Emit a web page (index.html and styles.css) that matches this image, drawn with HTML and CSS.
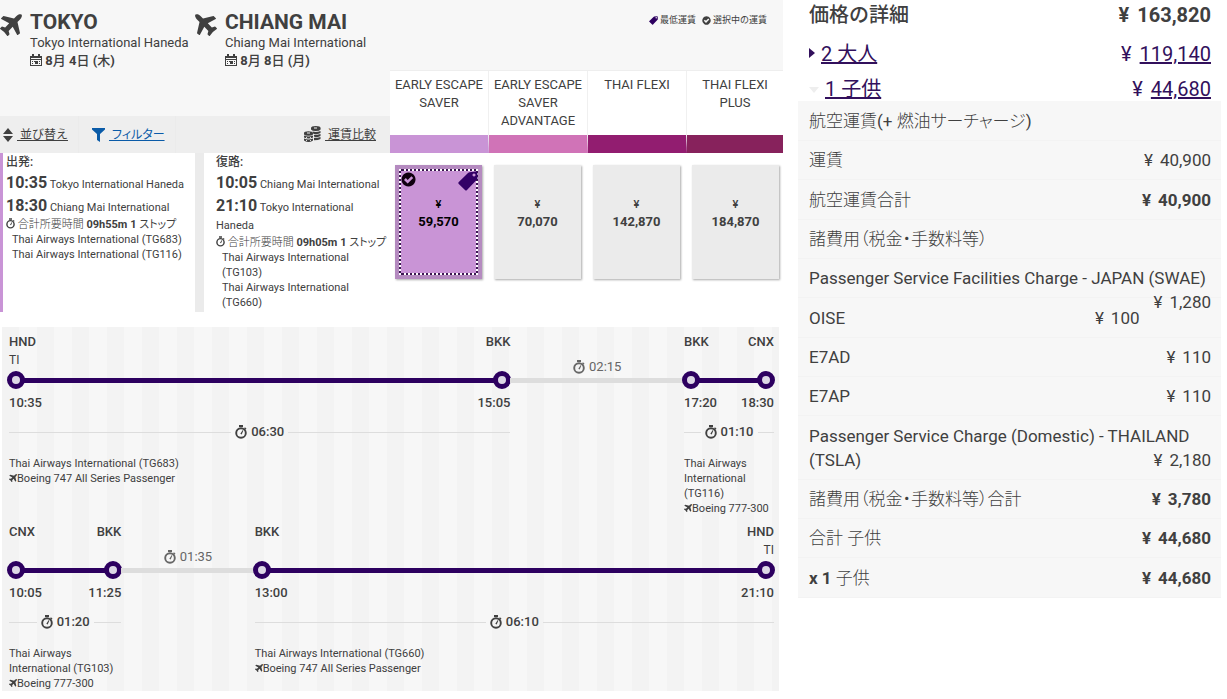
FILE: index.html
```html
<!DOCTYPE html>
<html lang="ja">
<head>
<meta charset="utf-8">
<title>フライト選択</title>
<link rel="stylesheet" href="styles.css">
</head>
<body>
<svg class="sprite" aria-hidden="true">
  <symbol id="plane" viewBox="0 128 1408 1408"><path d="M1376 160q44 52 12 148t-108 172l-161 161 160 696q5 19-12 33l-128 96q-7 6-19 6-4 0-7-1-15-3-21-14l-279-508-259 259 53 194q5 17-8 31l-96 96q-9 9-23 9h-2q-15-2-24-13l-189-252-252-189q-11-7-13-23-1-13 9-25l96-97q9-9 23-9 6 0 8 1l194 53 259-259-508-279q-14-8-17-24-2-16 9-27l128-128q14-13 30-8l665 159 160-160q76-76 172-108t148 12z"/></symbol>
  <symbol id="calendar" viewBox="0 0 12 12"><path fill-rule="evenodd" d="M0 2h2V0h2v2h4V0h2v2h2v10H0zM1 4v1h10V4zM1 6v5h10V6z"/><path d="M2 7h1v1H2zM4 7h1v1H4zM9 7h1v1H9zM5 7h3v3H5zM2 9h1v1H2zM9 9h1v1H9z"/></symbol>
  <symbol id="watch" viewBox="0 0 12 14"><path d="M4 0h4v2H4z"/><path d="M10 2.200l1.500 1.500-1 1L9 3.200z"/><circle cx="6" cy="8" r="4.800" fill="none" stroke="currentColor" stroke-width="1.900"/><path d="M5.300 8.800L7.800 5l.6.4-1.700 4z"/></symbol>
  <symbol id="tag" viewBox="0 0 20 20"><path fill-rule="evenodd" d="M11.500 1.200L18 .500q1.300 0 1.400 1.200l.2 5.300q0 .8-.6 1.400L9 19q-1 1-2 0L.8 13q-1-1 0-2L10 2q.7-.7 1.500-.8zM16 2.400a1.500 1.500 0 1 0 .01 0z"/></symbol>
  <symbol id="check" viewBox="0 0 16 16"><path fill-rule="evenodd" d="M8 .500a7.500 7.500 0 1 0 .01 0zM3.200 8.400l1.900-1.900 2 2 4-4 1.900 1.900-5.900 5.900z"/></symbol>
  <symbol id="sort" viewBox="0 0 10 14"><path d="M5 0l5 6H0zM0 8h10l-5 6z"/></symbol>
  <symbol id="funnel" viewBox="0 0 13 14"><path d="M0 0h13v1.500L8 6v8l-3-2V6L0 1.500z"/></symbol>
  <symbol id="coins" viewBox="0 0 17 17"><path d="M7 2q0-2 4.800-2t4.800 2v1.500q-1 1.500-4.800 1.500T7 3.500zM8.500 5.500q4 1 8-.5v2q-2 1.500-7 1zM9.800 9q4 0 6.700-1v2q-2 1.200-6 1.200zM10 12q4 0 6.500-1v2q-2 1.300-6.500 1.300z"/><path d="M0 7q0-1.800 4.400-1.800T9 7v1.500q-1 1.300-4.600 1.300T0 8.500zM0 9.500q4.400 2 9 0v2q-4.400 2-9 0zM0 12.600q4.400 2 9 0v2q-4.400 3-9 0z"/><path d="M3 7h3M10 2h3M2 11.600h1M6 11.600h1M2 14.600h1M6 14.600h1" fill="none" stroke="#eee"/></symbol>
</svg>
<main class="page">
  <section class="booking">
    <header class="head">
      <div class="head-left">
        <div class="trips">
          <div class="trip">
            <svg class="trip-icon"><use href="#plane"/></svg>
            <div>
              <h2 class="city">TOKYO</h2>
              <p class="airport">Tokyo International Haneda</p>
              <p class="date"><svg class="cal"><use href="#calendar"/></svg> <b>8</b>月 <b>4</b>日 <b>(</b>木<b>)</b></p>
            </div>
          </div>
          <div class="trip">
            <svg class="trip-icon mirrored"><use href="#plane"/></svg>
            <div>
              <h2 class="city">CHIANG MAI</h2>
              <p class="airport">Chiang Mai International</p>
              <p class="date"><svg class="cal"><use href="#calendar"/></svg> <b>8</b>月 <b>8</b>日 <b>(</b>月<b>)</b></p>
            </div>
          </div>
        </div>
        <nav class="tools">
          <a class="tool" href="#sort"><svg class="i-sort"><use href="#sort"/></svg><span>&nbsp;並び替え</span></a>
          <a class="tool tool-blue" href="#filter"><svg class="i-funnel"><use href="#funnel"/></svg><span class="kana">&nbsp;フィルター</span></a>
          <a class="tool tool-end" href="#compare"><svg class="i-coins"><use href="#coins"/></svg><span>&nbsp;運賃比較</span></a>
        </nav>
      </div>
      <div class="head-right">
        <p class="legend"><svg class="i-legend purple"><use href="#tag"/></svg><span>最低運賃</span><svg class="i-legend second"><use href="#check"/></svg><span>選択中の運賃</span></p>
        <div class="families">
          <div class="family lilac">EARLY ESCAPE SAVER</div>
          <div class="family pink">EARLY ESCAPE SAVER ADVANTAGE</div>
          <div class="family plum">THAI FLEXI</div>
          <div class="family wine">THAI FLEXI PLUS</div>
        </div>
      </div>
    </header>
    <div class="choice">
      <div class="legs">
        <div class="leg leg-out">
          <p class="way">出発:</p>
          <p class="stop"><b class="clock">10:35</b> Tokyo International Haneda</p>
          <p class="stop"><b class="clock">18:30</b> Chiang Mai International</p>
          <p class="total"><svg class="i-watch small"><use href="#watch"/></svg> <span class="thin">合計所要時間</span> <b>09h55m 1</b> <span class="kana">ストップ</span></p>
          <ul class="flights"><li>Thai Airways International (TG683)</li><li>Thai Airways International (TG116)</li></ul>
        </div>
        <div class="leg leg-back">
          <p class="way">復路:</p>
          <p class="stop"><b class="clock">10:05</b> Chiang Mai International</p>
          <p class="stop"><b class="clock">21:10</b> Tokyo International Haneda</p>
          <p class="total"><svg class="i-watch small"><use href="#watch"/></svg> <span class="thin">合計所要時間</span> <b>09h05m 1</b> <span class="kana">ストップ</span></p>
          <ul class="flights"><li>Thai Airways International (TG103)</li><li>Thai Airways International (TG660)</li></ul>
        </div>
      </div>
      <div class="fares">
        <button class="fare selected" type="button" aria-pressed="true"><span class="yen">¥</span><span>59,570</span><svg class="mark-check"><use href="#check"/></svg><svg class="mark-tag"><use href="#tag"/></svg></button>
        <button class="fare" type="button"><span class="yen">¥</span><span>70,070</span></button>
        <button class="fare" type="button"><span class="yen">¥</span><span>142,870</span></button>
        <button class="fare" type="button"><span class="yen">¥</span><span>184,870</span></button>
      </div>
    </div>
    <div class="timeline">
      <div class="route">
        <div class="segment" style="flex-grow:390">
          <div class="ends"><span>HND<small>TI</small></span><span>BKK</span></div>
          <div class="track"></div>
          <div class="times"><span>10:35</span><span>15:05</span></div>
          <p class="duration"><svg class="i-watch"><use href="#watch"/></svg>06:30</p>
          <p class="craft">Thai Airways International (TG683)<br><svg class="i-craft"><use href="#plane"/></svg>Boeing 747 All Series Passenger</p>
        </div>
        <div class="layover" style="flex-grow:135"><svg class="i-watch"><use href="#watch"/></svg>02:15</div>
        <div class="segment" style="flex-grow:70">
          <div class="ends"><span>BKK</span><span>CNX</span></div>
          <div class="track"></div>
          <div class="times"><span>17:20</span><span>18:30</span></div>
          <p class="duration"><svg class="i-watch"><use href="#watch"/></svg>01:10</p>
          <p class="craft">Thai Airways International (TG116)<br><svg class="i-craft"><use href="#plane"/></svg>Boeing 777-300</p>
        </div>
      </div>
      <div class="route">
        <div class="segment" style="flex-grow:80">
          <div class="ends"><span>CNX</span><span>BKK</span></div>
          <div class="track"></div>
          <div class="times"><span>10:05</span><span>11:25</span></div>
          <p class="duration"><svg class="i-watch"><use href="#watch"/></svg>01:20</p>
          <p class="craft">Thai Airways International (TG103)<br><svg class="i-craft"><use href="#plane"/></svg>Boeing 777-300</p>
        </div>
        <div class="layover" style="flex-grow:95"><svg class="i-watch"><use href="#watch"/></svg>01:35</div>
        <div class="segment" style="flex-grow:370">
          <div class="ends"><span>BKK</span><span>HND<small>TI</small></span></div>
          <div class="track"></div>
          <div class="times"><span>13:00</span><span>21:10</span></div>
          <p class="duration"><svg class="i-watch"><use href="#watch"/></svg>06:10</p>
          <p class="craft">Thai Airways International (TG660)<br><svg class="i-craft"><use href="#plane"/></svg>Boeing 747 All Series Passenger</p>
        </div>
      </div>
    </div>
  </section>
  <aside class="price">
    <h2 class="price-title"><span>価格の詳細</span><span class="sum"><span class="cur">¥</span>163,820</span></h2>
    <p class="pax"><span><i class="arrow"></i><a href="#adult">2 大人</a></span><span class="sum"><span class="cur">¥</span><a href="#adult">119,140</a></span></p>
    <p class="pax"><span><i class="arrow open"></i><a href="#child">1 子供</a></span><span class="sum"><span class="cur">¥</span><a href="#child">44,680</a></span></p>
    <ul class="items">
      <li class="tall thin">航空運賃<b>(+</b> <span class="kana">燃油サーチャージ</span><b>)</b></li>
      <li><span class="thin">運賃</span><span class="amount"><span class="cur">¥</span>40,900</span></li>
      <li class="tall"><span class="thin">航空運賃合計</span><b class="amount"><span class="cur">¥</span>40,900</b></li>
      <li class="thin kana">諸費用（税金・手数料等）</li>
      <li>Passenger Service Facilities Charge - JAPAN (SWAE)<span class="amount"><span class="cur">¥</span>1,280</span></li>
      <li class="tall">OISE<span class="amount"><span class="cur">¥</span>100</span></li>
      <li>E7AD<span class="amount"><span class="cur">¥</span>110</span></li>
      <li>E7AP<span class="amount"><span class="cur">¥</span>110</span></li>
      <li class="tall">Passenger Service Charge (Domestic) - THAILAND (TSLA)<span class="amount"><span class="cur">¥</span>2,180</span></li>
      <li><span class="thin kana">諸費用（税金・手数料等）合計</span><b class="amount"><span class="cur">¥</span>3,780</b></li>
      <li><span class="thin">合計 子供</span><b class="amount"><span class="cur">¥</span>44,680</b></li>
      <li class="tall"><b>x 1</b> <span class="thin">子供</span><b class="amount"><span class="cur">¥</span>44,680</b></li>
    </ul>
  </aside>
</main>
</body>
</html>
```
FILE: styles.css
```css
*, *::before, *::after { box-sizing: border-box; }
body {
  margin: 0;
  background: #fff;
  color: #404040;
  font: 13px/18px Roboto, "Noto Sans CJK JP", sans-serif;
}
h2, p, ul { margin: 0; padding: 0; }
ul { list-style: none; }
svg { fill: currentColor; flex: none; }
.sprite { display: none; }
.thin { font-weight: 300; }
.kana { font-feature-settings: "palt"; }

.page {
  display: grid;
  grid-template-columns: minmax(0, 783fr) minmax(0, 423fr);
  gap: 15px;
  padding-right: 6px;
  align-items: start;
}

/* header */
.head, .choice {
  display: grid;
  grid-template-columns: minmax(0, 390fr) minmax(0, 393fr);
}
.head { background: #f7f7f7; }
.head-left, .head-right {
  display: flex;
  flex-direction: column;
  justify-content: space-between;
}
.trips {
  display: grid;
  grid-template-columns: 1fr 1fr;
  padding-top: 10px;
}
.trip { display: flex; gap: 8px; }
.trip-icon { width: 22px; height: 22px; margin-top: 4px; }
.mirrored { transform: scaleX(-1); }
.city { font-size: 21px; line-height: 24px; font-weight: 700; }
.date { font-weight: 500; }
.cal { width: 12px; height: 12px; vertical-align: -1px; }
.tools {
  display: flex;
  height: 37px;
  background: #eee;
}
.tool {
  display: flex;
  align-items: center;
  color: #404040;
  font-size: 12px;
  text-decoration: none;
  padding: 0 10px 0 3px;
  border-right: 1px solid #ebebeb;
  gap: 4px;
}
.tool span { text-decoration: underline; }
.tool-blue { color: #0a5ba8; padding-left: 13px; }
.tool-end { margin-left: auto; border: 0; padding-right: 14px; }
.i-sort { width: 10px; height: 14px; }
.i-funnel { width: 13px; height: 14px; }
.i-coins { width: 17px; height: 17px; }
.legend {
  display: flex;
  justify-content: flex-end;
  align-items: center;
  gap: 2px;
  padding: 11px 16px 41px 0;
  font-size: 9px;
}
.i-legend { width: 9px; height: 9px; }
.second { margin-left: 4px; }
.purple { color: #2d0060; }
.families {
  display: grid;
  grid-template-columns: 99fr 99fr 99fr 96fr;
  border-top: 1px solid #eee;
}
.family {
  min-height: 82px;
  padding: 5px 2px 4px;
  background: #fff;
  border-right: 1px solid #f0f0f0;
  border-bottom: 18px solid;
  text-align: center;
}
.lilac { border-bottom-color: #c994d6; }
.pink { border-bottom-color: #d073b7; }
.plum { border-bottom-color: #921d70; }
.wine { border-bottom-color: #87225c; border-right: 0; }

/* chosen flights */
.legs { display: grid; grid-template-columns: minmax(0, 1fr) minmax(0, 1fr); }
.leg { font-size: 11px; }
.leg-out { border-left: 3px solid #c994d6; padding-left: 3px; min-height: 159px; }
.leg-back { border-left: 9px solid #ebebeb; padding: 0 2px 0 12px; }
.way { font-size: 12px; font-weight: 500; }
.clock { font-size: 16px; line-height: 23px; }
.total { line-height: 15px; white-space: nowrap; }
.flights { padding-left: 6px; line-height: 15px; }
.fares {
  display: grid;
  grid-template-columns: repeat(4, 1fr);
  gap: 12px;
  padding: 12px 4px 0 5px;
  align-items: start;
}
.fare {
  position: relative;
  display: flex;
  flex-direction: column;
  align-items: center;
  height: 114px;
  padding: 31px 0 0;
  border: 0;
  background: #ebebeb;
  box-shadow: 1px 1px 2px #aaa;
  color: #404040;
  font: 700 13px/18px Roboto, sans-serif;
}
.yen { font-size: 11px; font-weight: 500; line-height: 17px; }
.selected {
  color: #000;
  padding-top: 27px;
  border: 4px solid #b58bc0;
  background: #c994d6;
}
.selected::before {
  content: "";
  position: absolute;
  inset: 0;
  border: 2px dotted #fff;
  background: linear-gradient(#c994d6, #c994d6) padding-box, #3a1550 border-box;
}
.selected span { position: relative; }
.mark-check { position: absolute; left: 2px; top: 3px; width: 15px; height: 15px; color: #100010; }
.mark-tag { position: absolute; right: 0; top: 2px; width: 20px; height: 20px; color: #330066; }

/* timeline */
.timeline {
  margin: 15px 4px 0 2px;
  padding: 6px 5px 0 7px;
  background: repeating-linear-gradient(90deg, #f3f3f3 0 17px, #f7f7f7 17px 35px);
}
.route { display: flex; }
.route + .route { margin-top: 7px; }
.segment { flex: 1 1 0; min-width: 0; }
.ends, .times { display: flex; justify-content: space-between; font-weight: 500; }
.ends { min-height: 36px; }
.ends span:last-child { text-align: right; }
.ends small { display: block; font-size: 12px; font-weight: 400; }
.track {
  display: flex;
  justify-content: space-between;
  margin: 2px -1px 5px -2px;
  background: linear-gradient(#2d0060, #2d0060) center / calc(100% - 26px) 5px no-repeat;
}
.track::before, .track::after {
  content: "";
  width: 18px;
  height: 18px;
  border: 5px solid #2d0060;
  border-radius: 50%;
  background: #ddd8e6;
}
.duration {
  display: flex;
  align-items: center;
  gap: 4px;
  margin: 11px 0 15px;
  font-weight: 500;
}
.duration::before, .duration::after {
  content: "";
  flex: 1;
  border-top: 1px solid #ddd;
}
.i-watch { width: 12px; height: 14px; }
.small { width: 9px; height: 11px; vertical-align: -1px; }
.craft { font-size: 11px; line-height: 15px; }
.i-craft { width: 8px; height: 8px; }
.layover {
  flex: 1 1 0;
  min-width: 0;
  display: flex;
  justify-content: center;
  align-items: center;
  gap: 4px;
  height: 25px;
  margin-top: 25px;
  padding-bottom: 2px;
  border-bottom: 5px solid #ddd;
  color: #666;
}

/* price */
.price-title, .pax {
  display: flex;
  justify-content: space-between;
  align-items: baseline;
  padding: 0 10px 0 11px;
  font-size: 20px;
}
.price-title { line-height: 30px; font-weight: 500; margin-bottom: 12px; }
.price-title .sum { font-weight: 700; }
.pax { line-height: 24px; color: #32105c; }
.pax + .pax { margin-top: 11px; }
.pax a { color: inherit; }
.sum .cur { margin-right: 8px; }
.arrow {
  display: inline-block;
  margin-right: 6px;
  border: 5px solid transparent;
  border-left: 6px solid #32105c;
  border-right: 0;
  vertical-align: 3px;
}
.open {
  border: 5px solid transparent;
  border-top: 6px solid #eee;
  border-bottom: 0;
}
.items { background: #f7f7f7; font-size: 17px; line-height: 24px; }
.items li { padding: 7px 10px 7px 11px; border-bottom: 1px solid #f3f3f3; }
.items .tall { padding-top: 8px; }
.amount { float: right; margin-left: 14px; }
.amount .cur { margin-right: 7px; }
```
